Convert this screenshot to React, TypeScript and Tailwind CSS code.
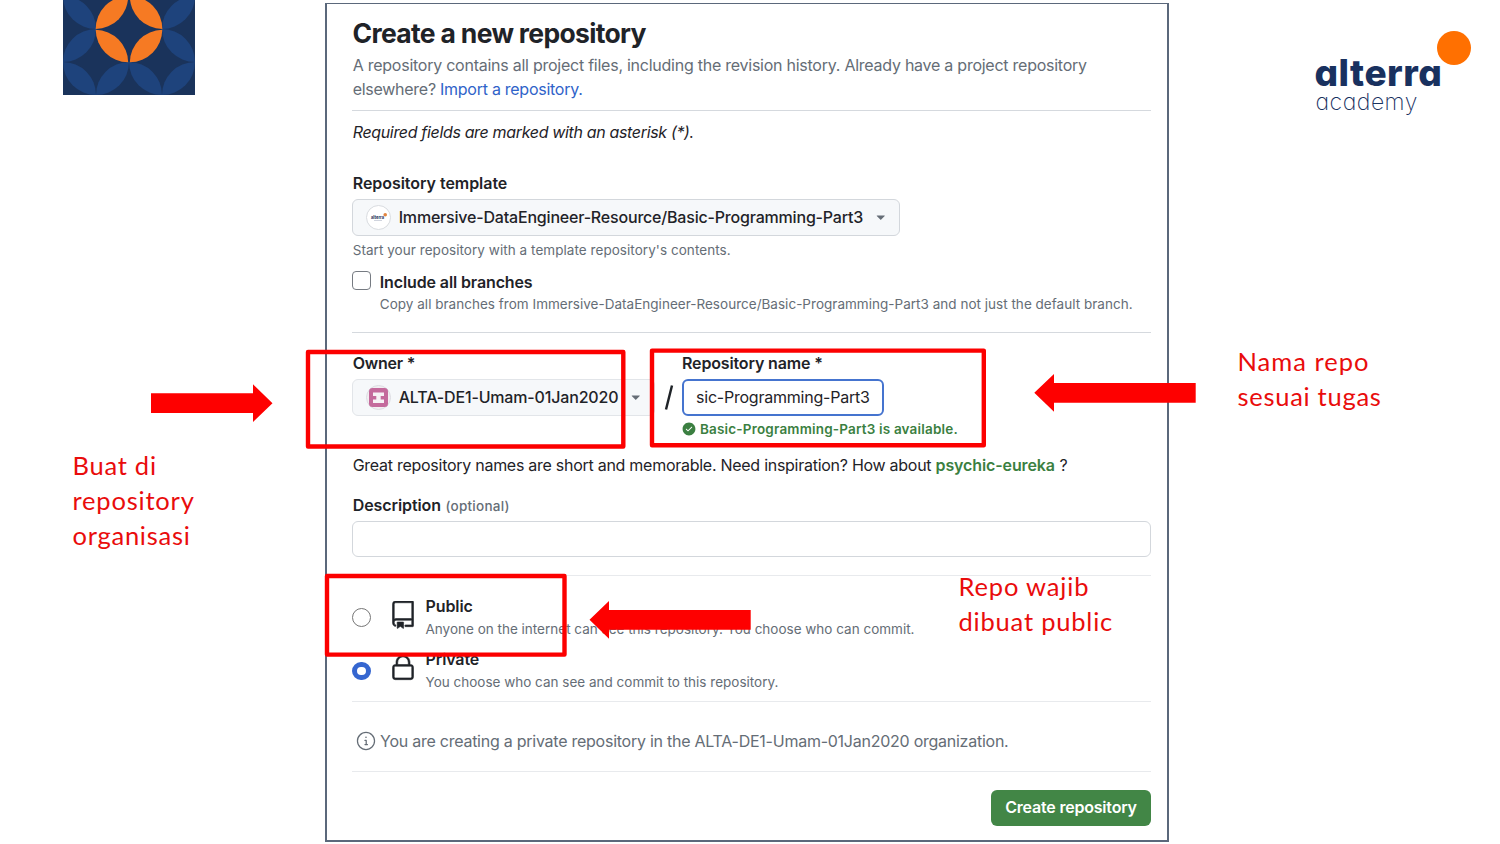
import type { ReactNode } from "react";
import { GoCheckCircleFill, GoInfo, GoLock, GoRepo, GoTriangleDown } from "react-icons/go";

const inter = "font-['Inter','Liberation_Sans',sans-serif]";

function PatternTile() {
  const petals = [
    "M63-4A33 33 0 0 1 96 29A33 33 0 0 1 63-4Z",
    "M63 62A33 33 0 0 1 96 29A33 33 0 0 1 63 62Z",
    "M63 62A33 33 0 0 1 96 95A33 33 0 0 1 63 62Z",
    "M96 95A33 33 0 0 1 129 62A33 33 0 0 1 96 95Z",
    "M129 62A33 33 0 0 1 162 95A33 33 0 0 1 129 62Z",
    "M162 95A33 33 0 0 1 195 62A33 33 0 0 1 162 95Z",
    "M162 29A33 33 0 0 1 195 62A33 33 0 0 1 162 29Z",
    "M162 29A33 33 0 0 1 195-4A33 33 0 0 1 162 29Z",
  ];
  const bright = [
    "M95.7 29A33 33 0 0 1 128.2-4A33 33 0 0 1 95.7 29Z",
    "M129.8-4A33 33 0 0 1 162.3 29A33 33 0 0 1 129.8-4Z",
    "M95.7 29.8A33 33 0 0 1 128.2 62.3A33 33 0 0 1 95.7 29.8Z",
    "M129.8 62.3A33 33 0 0 1 162.3 29.8A33 33 0 0 1 129.8 62.3Z",
  ];
  return (
    <svg className="ml-[63px] block h-[95px] w-[132px]" viewBox="63 0 132 95">
      <rect x="63" y="0" width="132" height="95" fill="#1a335b" />
      {petals.map((d) => (
        <path key={d} d={d} fill="#1e437c" />
      ))}
      {bright.map((d) => (
        <path key={d} d={d} fill="#f67a23" />
      ))}
    </svg>
  );
}

function Note({ children, className }: { children: ReactNode; className: string }) {
  return (
    <p className={`whitespace-nowrap font-['Lato','Open_Sans',sans-serif] text-[25.5px] leading-[35px] text-[#e90c0c] ${className}`}>
      {children}
    </p>
  );
}

function Rule({ className }: { className: string }) {
  return <div className={`h-px shrink-0 ${className}`} />;
}

function Visibility({ icon, title, detail, checked, className }: {
  icon: ReactNode;
  title: ReactNode;
  detail: ReactNode;
  checked: boolean;
  className: string;
}) {
  return (
    <div className={`flex h-[44px] ${className}`}>
      <span
        className={
          checked
            ? "mt-[13.5px] size-[18.5px] shrink-0 rounded-full border-[5px] border-[#3566d0] bg-white"
            : "mt-[13px] size-[18.5px] shrink-0 rounded-full border border-[#767676] bg-white"
        }
      />
      <span className="ml-[18px] w-7 shrink-0 text-[#1f2328]">{icon}</span>
      <div className="ml-[9px] whitespace-nowrap">
        <div className="text-base leading-[22px] font-semibold">{title}</div>
        <div className="mt-px text-[13.5px] leading-[22px] text-[#656d76]">{detail}</div>
      </div>
    </div>
  );
}

export default function App() {
  return (
    <div className={`relative flex h-[844px] w-[1500px] overflow-hidden bg-white ${inter}`}>
      <aside className="w-[325px] shrink-0">
        <PatternTile />
        <Note className="mt-[353px] pl-[72.5px]">
          <span className="tracking-[0.75px]">Buat di</span>
          <br />
          <span className="tracking-[0.8px]">repository</span>
          <br />
          <span className="tracking-[0.75px]">organisasi</span>
        </Note>
      </aside>

      <main className="mt-[3px] flex h-[839px] w-[844px] shrink-0 flex-col border-x-2 border-t border-b-2 border-[#5b687b] pr-[16px] pl-[25px] text-base text-[#1f2328]">
        <h1 className="mt-[13px] ml-[0.6px] h-8 text-[26.5px] leading-8 font-[650] tracking-[-0.68px]">Create a new repository</h1>
        <div className="mt-1 ml-[0.7px] h-12 leading-6 whitespace-nowrap text-[#656d76]">
          <div className="tracking-[-0.25px]">
            A repository contains all project files, including the revision history. Already have a project repository
          </div>
          <div className="tracking-[-0.27px]">
            elsewhere? <a className="text-[#2f63c9]">Import a repository.</a>
          </div>
        </div>
        <Rule className="mt-[9px] bg-[#d5d9de]" />
        <p className="mt-[9px] ml-[0.7px] h-6 leading-6 tracking-[-0.34px] italic">Required fields are marked with an asterisk (*).</p>

        <div className="mt-[27px] ml-[0.7px] h-6 leading-6 font-semibold tracking-[-0.04px]">Repository template</div>
        <button className="mt-1 flex h-[37px] w-[548px] shrink-0 items-center rounded-md border border-[#d3d7dc] bg-[#f6f8fa] pl-[13px] font-medium whitespace-nowrap">
          <svg className="size-[25px] shrink-0" viewBox="0 0 25 25">
            <circle cx="12.5" cy="12.5" r="12" fill="#fff" stroke="#d8dbdf" />
            <text x="5" y="14" fontSize="5" fontWeight="800" textLength="13" lengthAdjust="spacingAndGlyphs" fill="#33456b">alterra</text>
            <rect x="8" y="15.2" width="8" height="0.8" fill="#c5cad6" />
            <circle cx="19.2" cy="9.8" r="1.8" fill="#e2843f" />
          </svg>
          <span className="ml-[7.7px] pb-[2px] tracking-[-0.19px]">Immersive-DataEngineer-Resource/Basic-Programming-Part3</span>
          <GoTriangleDown className="ml-[10px] size-[15.5px] shrink-0 text-[#656d76]" />
        </button>
        <p className="mt-1 ml-[0.7px] h-5 text-[13.5px] leading-5 tracking-[0.05px] text-[#656d76]">
          Start your repository with a template repository's contents.
        </p>

        <div className="mt-[11px] flex h-[44px] whitespace-nowrap">
          <span className="size-[19px] shrink-0 rounded-[4px] border border-[#767b82] bg-white" />
          <div className="ml-[8.8px]">
            <div className="leading-[22px] font-semibold tracking-[-0.12px]">Include all branches</div>
            <div className="text-[13.5px] leading-[22px] tracking-[0.02px] text-[#656d76]">
              Copy all branches from Immersive-DataEngineer-Resource/Basic-Programming-Part3 and not just the default branch.
            </div>
          </div>
        </div>
        <Rule className="mt-[17px] bg-[#d5d9de]" />

        <div className="mt-[20px] flex h-[86px] shrink-0 whitespace-nowrap">
          <div className="w-[303px] shrink-0">
            <div className="ml-[0.7px] h-5 leading-5 font-semibold tracking-[-0.2px]">Owner *</div>
            <button className="mt-[6px] flex h-[37px] w-[303px] items-center rounded-md border border-[#e2e5e9] bg-[#f6f8fa] pl-[13px] font-medium">
              <svg className="size-[25px] shrink-0" viewBox="0 0 25 25">
                <circle cx="12.5" cy="12.5" r="12" fill="#f3eef2" stroke="#dcdde2" />
                <rect x="3" y="3" width="19" height="19" rx="3.5" fill="#c46a9c" />
                <path d="M7 7.5H18V11H14.7V14.5H18V18H7V14.5H10.3V11H7Z" fill="#f6f1f5" />
              </svg>
              <span className="ml-[7.7px] pb-[2px] tracking-[-0.16px]">ALTA-DE1-Umam-01Jan2020</span>
              <GoTriangleDown className="ml-[10px] size-[15.5px] shrink-0 text-[#656d76]" />
            </button>
          </div>
          <div className="flex w-[27px] shrink-0 pt-[26px] pl-[9px]">
            <svg className="h-[37px] w-[10px]" viewBox="0 0 10 37">
              <path d="M8 6.5L2 30.5" stroke="#1f2328" strokeWidth="2.4" />
            </svg>
          </div>
          <div>
            <div className="h-5 leading-5 font-semibold tracking-[-0.15px]">Repository name *</div>
            <div className="mt-[6px] flex h-[37px] w-[202px] items-center rounded-md border-2 border-[#4574cf] bg-white pl-[12px]">
              <span className="pb-[2px] tracking-[-0.22px]">sic-Programming-Part3</span>
            </div>
            <div className="mt-[3px] flex h-5 items-center text-[13.5px] font-semibold text-[#3b7f41]">
              <GoCheckCircleFill className="size-[14px]" />
              <span className="ml-[4px] tracking-[0.18px]">Basic-Programming-Part3 is available.</span>
            </div>
          </div>
        </div>

        <p className="mt-[14px] ml-[0.7px] h-6 leading-6 whitespace-nowrap">
          <span className="tracking-[-0.27px]">Great repository names are short and memorable. Need inspiration? How about </span>
          <span className="font-semibold tracking-[-0.12px] text-[#3b7f41]">psychic-eureka</span> ?
        </p>

        <div className="mt-[16px] ml-[0.8px] h-6 leading-6">
          <span className="font-semibold tracking-[-0.1px]">Description</span>{" "}
          <span className="text-[13.5px] font-medium tracking-[0.25px] text-[#656d76]">(optional)</span>
        </div>
        <div className="mt-1 h-9 shrink-0 rounded-md border border-[#d3d7dc] bg-white" />

        <Rule className="mt-[18px] bg-[#e8eaed]" />
        <Visibility
          className="mt-[19px]"
          checked={false}
          icon={<GoRepo className="mt-[6px] size-7 stroke-current stroke-[0.5]" />}
          title={<span className="tracking-[-0.1px]">Public</span>}
          detail={<span>Anyone on the internet can see this repository. You choose who can commit.</span>}
        />
        <Visibility
          className="mt-[9px]"
          checked
          icon={<GoLock className="mt-[6px] size-7 stroke-current stroke-[0.5]" />}
          title={<span className="tracking-[-0.1px]">Private</span>}
          detail={<span>You choose who can see and commit to this repository.</span>}
        />
        <Rule className="mt-[9px] bg-[#e8eaed]" />
        <div className="mt-[27px] flex h-6 items-center whitespace-nowrap text-[#656d76]">
          <GoInfo className="ml-[4px] size-[20px]" />
          <span className="ml-[4px] tracking-[-0.25px]">
            You are creating a private repository in the ALTA-DE1-Umam-01Jan2020 organization.
          </span>
        </div>
        <Rule className="mt-[18px] bg-[#e8eaed]" />
        <button className="mt-[18px] h-9 w-40 shrink-0 self-end rounded-md bg-[#428646] pb-[2px] font-semibold tracking-[-0.2px] whitespace-nowrap text-white">
          Create repository
        </button>
      </main>

      <aside className="flex-1">
        <div className="pt-[53px] pl-[145.5px] text-[#19315f] [font-feature-settings:'cv11']">
          <div className="h-[40px] text-[37px] leading-[40px] font-extrabold tracking-[0.5px]">alterra</div>
          <div className="-mt-[3px] ml-[1px] h-[24px] text-[23px] leading-[24px] font-[250] tracking-[0.5px]">academy</div>
        </div>
        <Note className="mt-[230px] pl-[68.5px]">
          <span className="tracking-[1px]">Nama repo</span>
          <br />
          <span className="tracking-[0.72px]">sesuai tugas</span>
        </Note>
      </aside>

      <div className="absolute top-[31px] left-[1437px] size-[34px] rounded-full bg-[#ff7001]" />

      <Note className="absolute top-[569px] left-[958.5px]">
        <span className="tracking-[0.85px]">Repo wajib</span>
        <br />
        <span className="tracking-[0.8px]">dibuat public</span>
      </Note>

      <svg className="pointer-events-none absolute inset-0 h-[844px] w-[1500px]" viewBox="0 0 1500 844">
        <g fill="none" stroke="#fc0000" strokeWidth="4.4" strokeLinejoin="round">
          <rect x="308" y="352" width="315.3" height="94.5" />
          <rect x="652" y="350.6" width="331.8" height="94.6" />
          <rect x="327" y="576" width="237.5" height="78.6" />
        </g>
        <g fill="#fe0000">
          <path d="M151 393.3H253V384.3L272.5 403.2L253 422V413H151Z" />
          <path d="M1195.7 383H1054V374L1034.3 392.7L1054 411.7V402.7H1195.7Z" />
          <path d="M750.7 610H609V601L589.5 619.8L609 638.7V629.7H750.7Z" />
        </g>
      </svg>
    </div>
  );
}
